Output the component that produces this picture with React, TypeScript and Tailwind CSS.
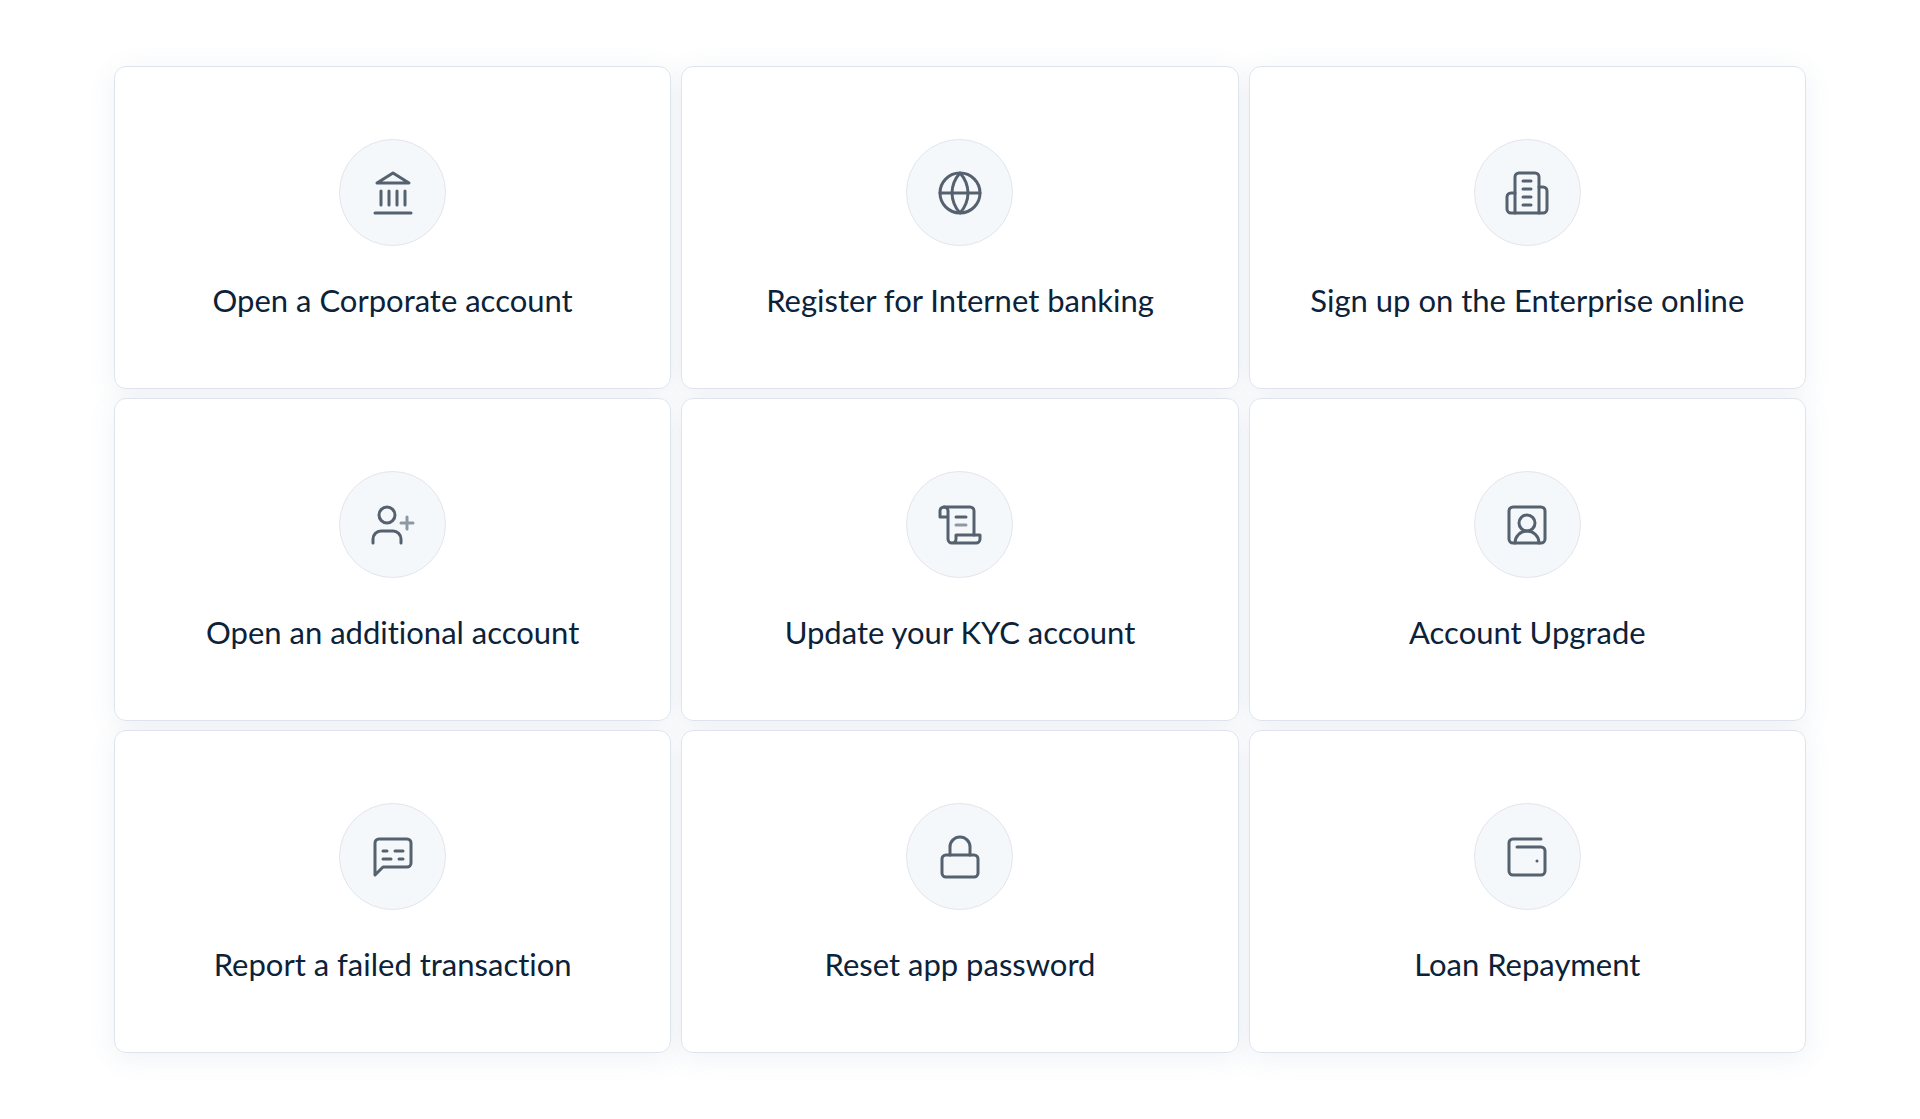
import type { ReactNode } from 'react';

type Action = { label: string; icon: ReactNode };

const actions: Action[] = [
  {
    label: 'Open a Corporate account',
    icon: (
      <>
        <path d="M12 2l8 5H4z" />
        <path d="M6 11v7M10 11v7M14 11v7M18 11v7M3 22h18" />
      </>
    ),
  },
  {
    label: 'Register for Internet banking',
    icon: (
      <>
        <circle cx="12" cy="12" r="10" />
        <path d="M2 12h20" />
        <path d="M12 2a15.3 15.3 0 0 1 4 10 15.3 15.3 0 0 1-4 10 15.3 15.3 0 0 1-4-10 15.3 15.3 0 0 1 4-10z" />
      </>
    ),
  },
  {
    label: 'Sign up on the Enterprise online',
    icon: (
      <>
        <path d="M6 22V4a2 2 0 0 1 2-2h8a2 2 0 0 1 2 2v18Z" />
        <path d="M6 12H4a2 2 0 0 0-2 2v6a2 2 0 0 0 2 2h2" />
        <path d="M18 9h2a2 2 0 0 1 2 2v9a2 2 0 0 1-2 2h-2" />
        <path d="M10 6h4M10 10h4M10 14h4M10 18h4" />
      </>
    ),
  },
  {
    label: 'Open an additional account',
    icon: (
      <>
        <circle cx="9" cy="7" r="4" />
        <path d="M16 21v-2a4 4 0 0 0-4-4H6a4 4 0 0 0-4 4v2" />
        <path d="M19 8v6M16 11h6" stroke="#8d98a3" />
      </>
    ),
  },
  {
    label: 'Update your KYC account',
    icon: (
      <>
        <path d="M8 21h12a2 2 0 0 0 2-2v-2H10v2a2 2 0 1 1-4 0V5a2 2 0 1 0-4 0v3h4" />
        <path d="M19 17V5a2 2 0 0 0-2-2H4" />
        <path d="M10 8h5" />
        <path d="M10 12h5" stroke="#8d98a3" />
      </>
    ),
  },
  {
    label: 'Account Upgrade',
    icon: (
      <>
        <rect x="3" y="3" width="18" height="18" rx="2" />
        <circle cx="12" cy="11" r="4" />
        <path d="M18 21a6 6 0 0 0-12 0" />
      </>
    ),
  },
  {
    label: 'Report a failed transaction',
    icon: (
      <>
        <path d="M21 15a2 2 0 0 1-2 2H7l-4 4V5a2 2 0 0 1 2-2h14a2 2 0 0 1 2 2z" />
        <path d="M7 9h2M13 9h4M7 13h4M15 13h2" />
      </>
    ),
  },
  {
    label: 'Reset app password',
    icon: (
      <>
        <rect x="3" y="11" width="18" height="11" rx="2" />
        <path d="M7 11V7a5 5 0 0 1 10 0v4" />
      </>
    ),
  },
  {
    label: 'Loan Repayment',
    icon: (
      <>
        <path d="M19 3H5a2 2 0 0 0-2 2v14a2 2 0 0 0 2 2h14a2 2 0 0 0 2-2V9a2 2 0 0 0-2-2H7" />
        <path d="M17 14h.01" />
      </>
    ),
  },
];

// The shadow sits on the list item and the link is stacked above it,
// so a neighbour's shadow only tints the gap between cards.
function ActionCard({ label, icon }: Action) {
  return (
    <li className="rounded-xl shadow-[0_5px_28px_rgba(65,95,150,0.09)]">
      <a
        href="#"
        className="relative flex flex-col items-center rounded-xl border border-[#dfe4ec] bg-white px-4 pt-18 pb-17 text-center"
      >
        <span className="flex size-[107px] items-center justify-center rounded-full border border-[#e4e5ec] bg-[#f4f8fb]">
          <svg
            viewBox="0 0 24 24"
            className="size-12 fill-none stroke-[#55616e] [stroke-linecap:round] [stroke-linejoin:round] [stroke-width:1.5]"
            aria-hidden="true"
          >
            {icon}
          </svg>
        </span>
        <span className="mt-[34px] text-[31px] leading-10 text-[#0b2239] [font-variant-ligatures:none]">{label}</span>
      </a>
    </li>
  );
}

export default function App() {
  return (
    <main className="min-h-screen bg-white px-[114px] py-[66px] font-['Lato',sans-serif]">
      <ul className="grid grid-cols-3 gap-x-[10px] gap-y-[9px]">
        {actions.map((action) => (
          <ActionCard key={action.label} {...action} />
        ))}
      </ul>
    </main>
  );
}
